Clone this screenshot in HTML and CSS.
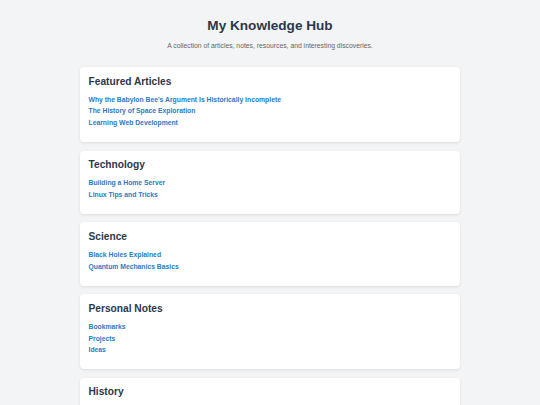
FILE: index.html
```html
<!DOCTYPE html>
<html lang="en">
<head>
<meta charset="utf-8">
<title>My Knowledge Hub</title>
<link rel="stylesheet" href="styles.css">
</head>
<body>
<div class="page">
  <header class="hub-header">
    <h1 class="hub-title">My Knowledge Hub</h1>
    <p class="hub-subtitle">A collection of articles, notes, resources, and interesting discoveries.</p>
  </header>
  <main class="sections">
    <section class="card">
      <h2 class="card-title">Featured Articles</h2>
      <ul class="link-list">
        <li><a href="#">Why the Babylon Bee's Argument Is Historically Incomplete</a></li>
        <li><a href="#">The History of Space Exploration</a></li>
        <li><a href="#">Learning Web Development</a></li>
      </ul>
    </section>
    <section class="card">
      <h2 class="card-title">Technology</h2>
      <ul class="link-list">
        <li><a href="#">Building a Home Server</a></li>
        <li><a href="#">Linux Tips and Tricks</a></li>
      </ul>
    </section>
    <section class="card">
      <h2 class="card-title">Science</h2>
      <ul class="link-list">
        <li><a href="#">Black Holes Explained</a></li>
        <li><a href="#">Quantum Mechanics Basics</a></li>
      </ul>
    </section>
    <section class="card">
      <h2 class="card-title">Personal Notes</h2>
      <ul class="link-list">
        <li><a href="#">Bookmarks</a></li>
        <li><a href="#">Projects</a></li>
        <li><a href="#">Ideas</a></li>
      </ul>
    </section>
    <section class="card card-last">
      <h2 class="card-title">History</h2>
    </section>
  </main>
</div>
</body>
</html>
```

FILE: styles.css
```css
html, body {
  margin: 0;
  padding: 0;
}

body {
  background: #f3f4f6;
  font-family: "Liberation Sans", Arial, Helvetica, sans-serif;
  color: #333;
}

.page {
  width: 380px;
  margin: 0 auto;
  padding-top: 17px;
}

.hub-header {
  text-align: center;
  margin-bottom: 17px;
}

.hub-title {
  margin: 0;
  font-size: 13.6px;
  line-height: 18px;
  font-weight: bold;
  color: #2d3748;
}

.hub-subtitle {
  margin: 6px 0 0;
  font-size: 6.8px;
  line-height: 9px;
  color: #666;
}

.sections {
  display: flex;
  flex-direction: column;
  gap: 8.5px;
}

.card {
  background: #fff;
  border-radius: 4px;
  box-shadow: 0 1px 3px rgba(0, 0, 0, 0.1);
  padding: 8.5px 8.5px 14.75px;
}

.card-last {
  min-height: 40px;
}

.card-title {
  margin: 0 0 8.7px;
  font-size: 10.2px;
  line-height: 11.7px;
  font-weight: bold;
  color: #2d3748;
}

.link-list {
  list-style: none;
  margin: 0;
  padding: 0;
  display: flex;
  flex-direction: column;
  gap: 3.4px;
}

.link-list a {
  display: block;
  font-size: 6.8px;
  line-height: 8.2px;
  font-weight: bold;
  color: #2b7bc6;
  text-decoration: none;
}
```
